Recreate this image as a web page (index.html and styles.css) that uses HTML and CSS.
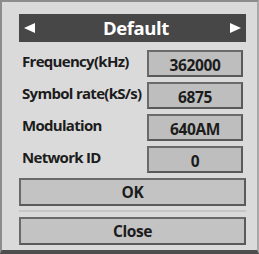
FILE: index.html
```html
<!DOCTYPE html>
<html>
<head>
<meta charset="utf-8">
<link rel="stylesheet" href="styles.css">
</head>
<body>
<div class="dialog">
  <div class="header">
    <span class="arrow left"></span>
    <span class="title">Default</span>
    <span class="arrow right"></span>
  </div>
  <div class="rows">
    <div class="row"><span class="label">Frequency(kHz)</span><span class="value">362000</span></div>
    <div class="row"><span class="label">Symbol rate(kS/s)</span><span class="value">6875</span></div>
    <div class="row"><span class="label">Modulation</span><span class="value">640AM</span></div>
    <div class="row"><span class="label">Network ID</span><span class="value">0</span></div>
  </div>
  <div class="btn ok">OK</div>
  <div class="sep"></div>
  <div class="btn">Close</div>
</div>
</body>
</html>
```
FILE: styles.css
```css
html, body {
  margin: 0;
  padding: 0;
  background: #dadada;
}
.dialog {
  width: 259px;
  height: 254px;
  box-sizing: border-box;
  background: #dadada;
  border-top: 2px solid #8c8c8c;
  border-left: 2px solid #8c8c8c;
  border-right: 2px solid #a8a8a8;
  border-bottom: 4px solid #4e4e4e;
  padding: 12px 11px 0 17px;
  font-family: "Open Sans", "Noto Sans", sans-serif;
  font-weight: bold;
  color: #1c1c1c;
  display: flex;
  flex-direction: column;
}
.header {
  height: 28px;
  background: #474747;
  display: flex;
  align-items: center;
  justify-content: space-between;
  padding: 0 5px 0 5px;
}
.title {
  color: #ffffff;
  font-size: 18.5px;
  letter-spacing: -0.4px;
  line-height: 28px;
  margin-left: 7px;
}
.arrow {
  width: 0;
  height: 0;
  border-top: 5.5px solid transparent;
  border-bottom: 5.5px solid transparent;
}
.arrow.left {
  border-right: 11px solid #ffffff;
}
.arrow.right {
  border-left: 11px solid #ffffff;
}
.rows {
  margin-top: 8px;
  display: flex;
  flex-direction: column;
  gap: 5px;
  padding: 0 3px;
}
.row {
  display: flex;
  justify-content: space-between;
  align-items: center;
  height: 27px;
}
.label {
  font-size: 15px;
  letter-spacing: -0.7px;
  position: relative;
  top: -3px;
}
.value {
  width: 96px;
  height: 27px;
  box-sizing: border-box;
  background: #bebebe;
  border: 2px solid #5a5a5a;
  border-top-color: #6a6a6a;
  border-left-color: #6a6a6a;
  font-size: 15.5px;
  letter-spacing: -0.4px;
  text-align: center;
  line-height: 23px;
  padding-top: 2px;
}
.btn {
  height: 28px;
  box-sizing: border-box;
  background: #c3c3c3;
  border: 2px solid #5a5a5a;
  border-top-color: #6a6a6a;
  border-left-color: #6a6a6a;
  font-size: 15.5px;
  letter-spacing: -0.4px;
  text-align: center;
  line-height: 24px;
}
.ok {
  margin-top: 5px;
}
.sep {
  height: 2px;
  margin: 4px 0 5px;
  background: #c6c6c6;
}
```
